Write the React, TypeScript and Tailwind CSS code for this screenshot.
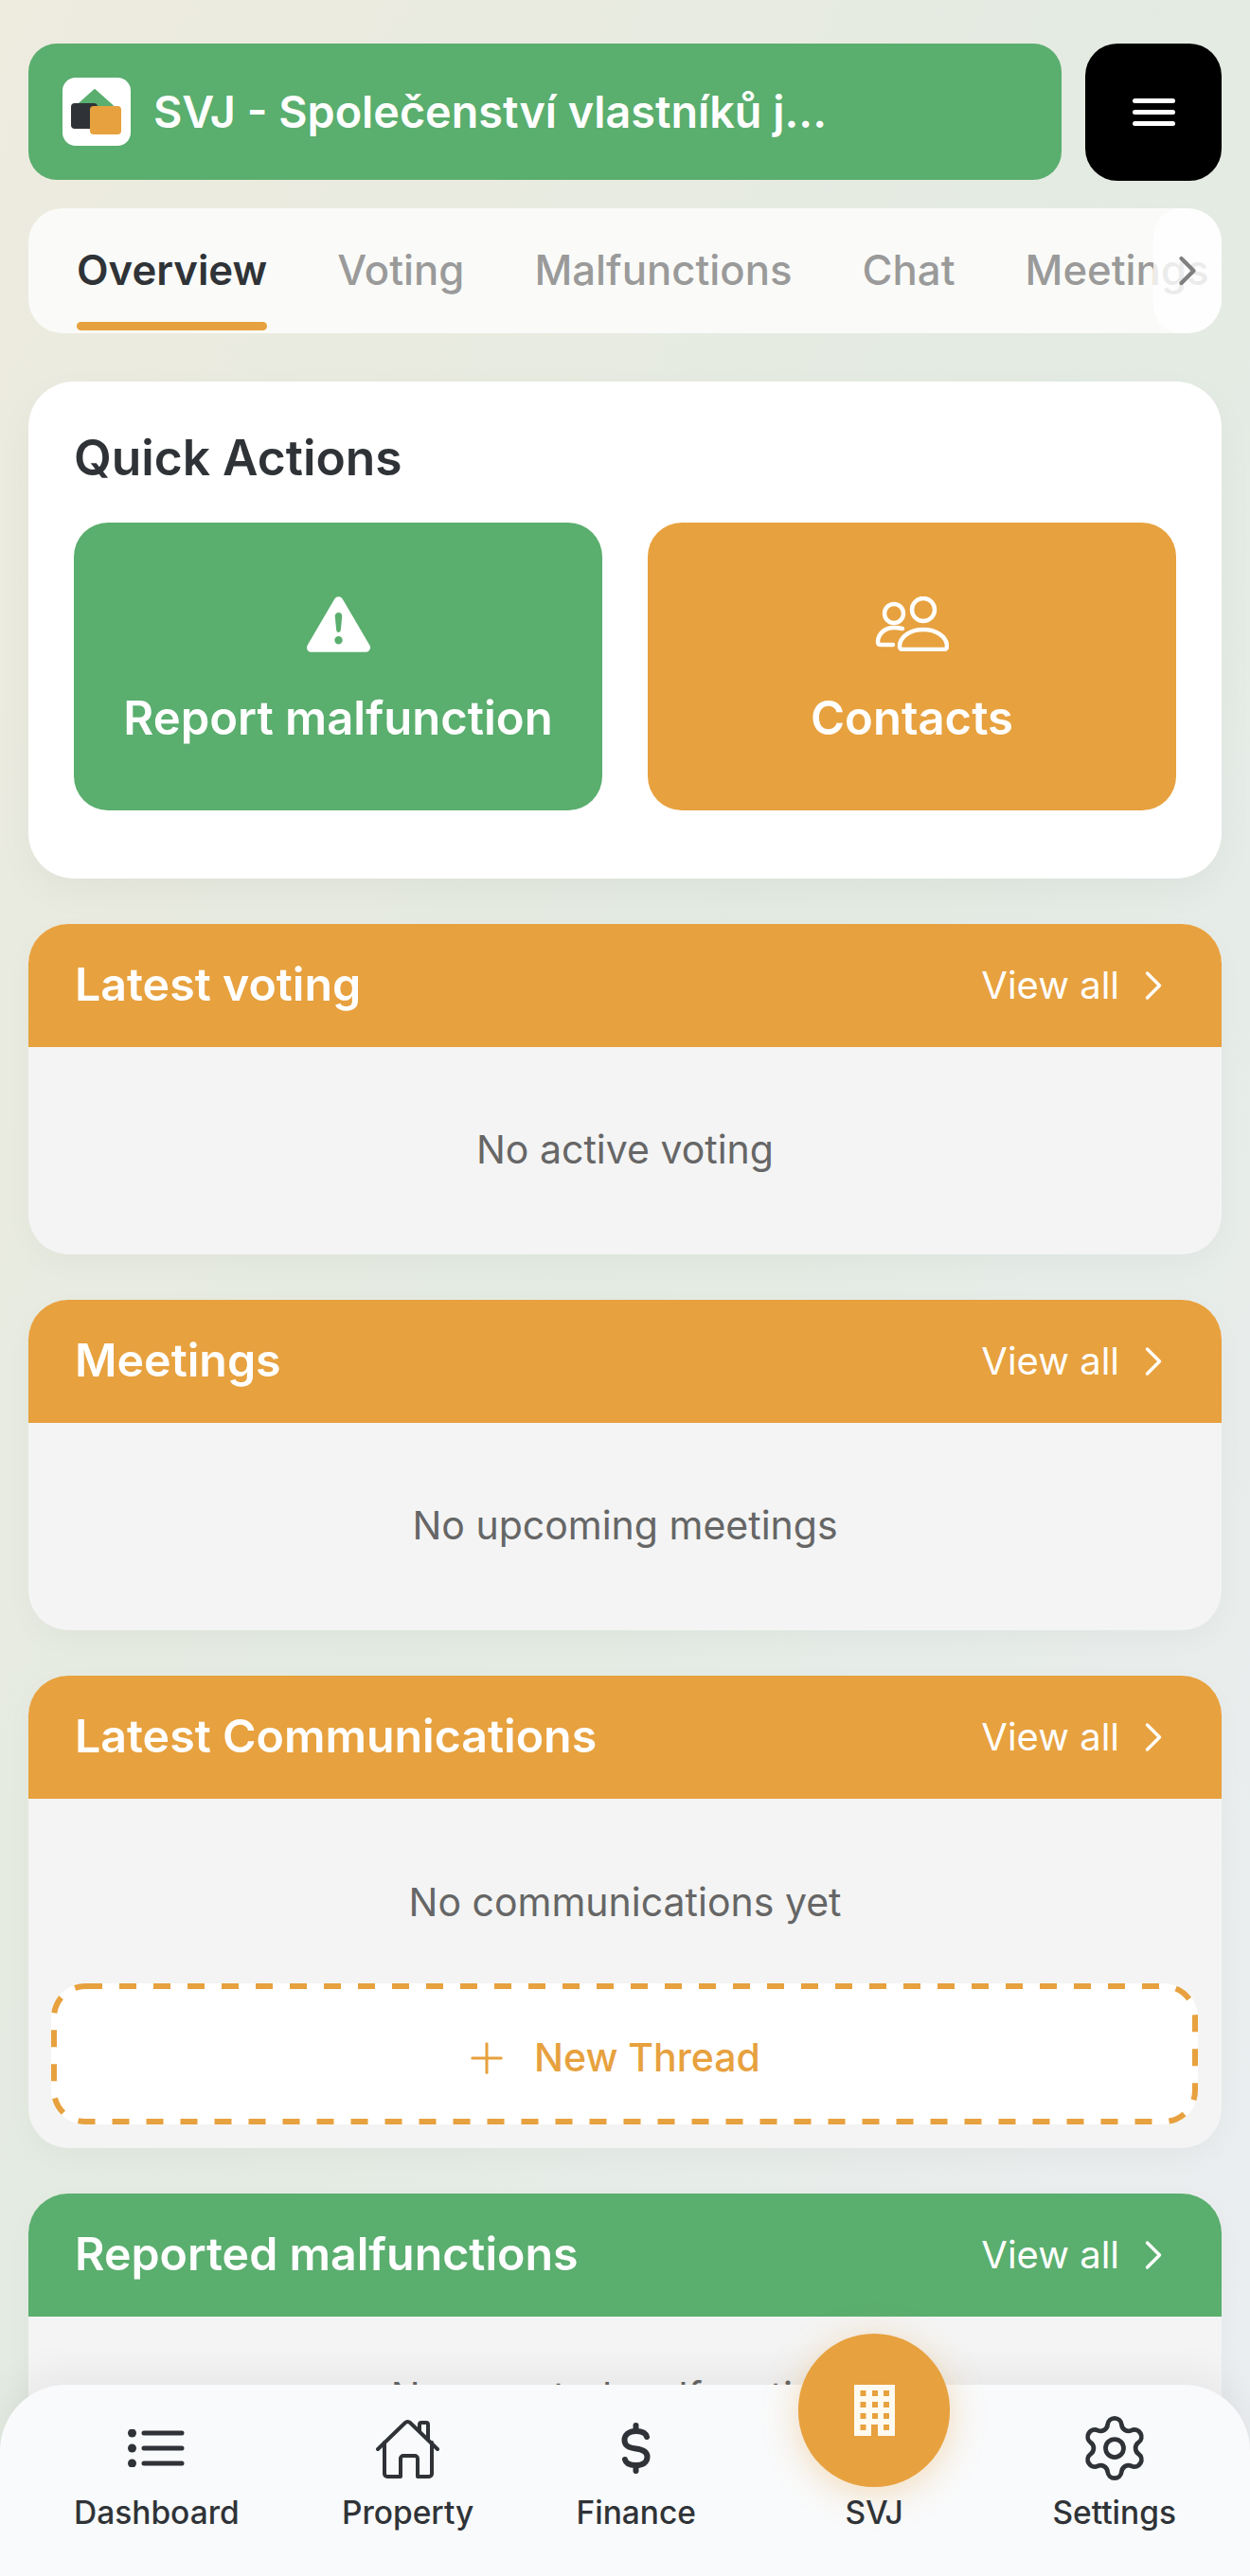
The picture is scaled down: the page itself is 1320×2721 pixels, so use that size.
import { ChevronRight, Plus, Settings } from 'lucide-react'
import { BsExclamationTriangleFill } from 'react-icons/bs'

const tabs = ['Overview', 'Voting', 'Malfunctions', 'Chat', 'Meetings']

function Logo() {
  return (
    <span className="flex h-[72px] w-[72px] shrink-0 rounded-[14px] bg-white">
      <svg width="72" height="72" viewBox="0 0 72 72" aria-hidden="true">
        <path d="M34 13 L53 30 H15 Z" fill="#5aae6e" stroke="#5aae6e" strokeWidth="2" strokeLinejoin="round" />
        <rect x="9" y="27" width="28" height="27" rx="4" fill="#2f3337" />
        <rect x="29" y="30" width="33" height="30" rx="4" fill="#e7a13e" />
      </svg>
    </span>
  )
}

function ContactsIcon() {
  return (
    <svg width="78" height="58" viewBox="0 0 78 58" fill="none" stroke="white" strokeWidth="4.5" strokeLinecap="round" strokeLinejoin="round" aria-hidden="true">
      <ellipse cx="51" cy="14" rx="12" ry="12" />
      <ellipse cx="20" cy="18" rx="10" ry="10" />
      <path d="M29 56 H73 a3 3 0 0 0 3-3 C76 42 64 35 51 35 C38 35 26 42 26 53 a3 3 0 0 0 3 3 Z" />
      <path d="M29 34 C27 33.5 24 33 20 33 C10 33 3 40 3 48 C3 50 4 51 6 51 H19" />
    </svg>
  )
}

function ListIcon() {
  return (
    <svg width="60" height="40" viewBox="0 0 60 40" fill="none" stroke="#2f3337" strokeWidth="5" strokeLinecap="round" aria-hidden="true">
      <path d="M17 4 H57 M17 20 H57 M17 36 H57" />
      <circle cx="4.5" cy="4" r="4.5" fill="#2f3337" stroke="none" />
      <circle cx="4.5" cy="20" r="4.5" fill="#2f3337" stroke="none" />
      <circle cx="4.5" cy="36" r="4.5" fill="#2f3337" stroke="none" />
    </svg>
  )
}

function HomeIcon() {
  return (
    <svg width="67" height="63" viewBox="0 0 67 63" fill="none" stroke="#2f3337" strokeWidth="4" strokeLinecap="round" strokeLinejoin="round" aria-hidden="true">
      <path d="M2 32 L31 4 a3.5 3.5 0 0 1 5 0 L65 32" />
      <path d="M9 25 V58 a3 3 0 0 0 3 3 H26 V42 a3 3 0 0 1 3-3 h12 a3 3 0 0 1 3 3 V61 H56 a3 3 0 0 0 3-3 V25" />
      <path d="M46 12 V6 a2 2 0 0 1 2-2 h5 a2 2 0 0 1 2 2 V21" />
    </svg>
  )
}

function DollarIcon() {
  return (
    <svg width="31" height="54" viewBox="0 0 31 54" fill="none" stroke="#2f3337" strokeWidth="6" strokeLinecap="round" aria-hidden="true">
      <path d="M15.5 3 V9 M15.5 45 V51" />
      <path d="M27 15 C26 11 22 9 15.5 9 C8 9 3.5 13 3.5 18.5 C3.5 24.5 8 26.5 15.5 27.5 C23 28.5 27.5 30.5 27.5 36 C27.5 42 23 45 15.5 45 C9 45 5 43 4 39" />
    </svg>
  )
}

function BuildingIcon() {
  const rows = [6, 18, 30, 42]
  const cols = [6.5, 19, 31]
  return (
    <svg width="43" height="54" viewBox="0 0 43 54" aria-hidden="true">
      <rect width="43" height="54" fill="#fffaf0" />
      {rows.map(y => cols.map(x => <rect key={`${x}-${y}`} x={x} y={y} width="6" height="6" fill="#e7a13e" />))}
      <rect x="18" y="42" width="7" height="12" fill="#e7a13e" />
    </svg>
  )
}

function Section({ title, color, empty, bodyClass, children }: {
  title: string
  color: string
  empty: string
  bodyClass: string
  children?: React.ReactNode
}) {
  return (
    <section className="mt-[48px] overflow-hidden rounded-[42px] bg-[#f4f4f4] shadow-[0_10px_30px_rgba(0,0,0,0.03)]">
      <div className={`flex h-[130px] items-center justify-between pl-[49px] pr-[60px] text-white ${color}`}>
        <h2 className="mb-[2px] text-[48.3px] font-semibold">{title}</h2>
        <a href="#" className="flex items-center gap-[10px] text-[40px]">
          View all
          <ChevronRight size={52} strokeWidth={1.6} className="-mr-[14px]" />
        </a>
      </div>
      <p className={`text-center text-[41px] leading-[60px] text-[#666666] ${bodyClass}`}>{empty}</p>
      {children}
    </section>
  )
}

function NavItem({ label, icon }: { label: string; icon: React.ReactNode }) {
  return (
    <a href="#" className="flex flex-col items-center">
      <span className="flex h-[72px] items-center justify-center">{icon}</span>
      <span className="mt-[12px] text-[33.5px] font-medium leading-[40px] text-[#2f3337]">{label}</span>
    </a>
  )
}

export default function App() {
  return (
    <div className="relative h-[2721px] overflow-hidden bg-linear-to-br from-[#eeebdf] via-[#e3ebe2] to-[#eceef2] px-[30px] pt-[46px] font-['Inter',sans-serif]">
      <header className="flex gap-[25px]">
        <div className="flex h-[144px] flex-1 items-center gap-[24px] rounded-[30px] bg-[#5aae6e] pl-[36px] text-white">
          <Logo />
          <h1 className="text-[46.7px] font-semibold">SVJ - Společenství vlastníků j...</h1>
        </div>
        <button className="flex h-[145px] w-[144px] flex-col items-center justify-center gap-[7px] rounded-[34px] bg-black" aria-label="Menu">
          <span className="h-[5px] w-[45px] rounded-full bg-white" />
          <span className="h-[5px] w-[45px] rounded-full bg-white" />
          <span className="h-[5px] w-[45px] rounded-full bg-white" />
        </button>
      </header>

      <nav className="relative mt-[29px] flex h-[132px] gap-[74px] overflow-hidden rounded-[36px] bg-[#fafbf8] pl-[51px]">
        {tabs.map((tab, i) => (
          <a
            key={tab}
            href="#"
            className={`relative flex shrink-0 items-center text-[43.7px] ${i === 0 ? 'font-semibold text-[#2f3337]' : 'font-medium text-[#9a9a9a]'}`}
          >
            {tab}
            {i === 0 && <span className="absolute inset-x-0 bottom-[3px] h-[9px] rounded-full bg-[#e7a13e]" />}
          </a>
        ))}
        <span className="absolute inset-y-0 right-0 flex w-[72px] items-center justify-center rounded-l-[30px] bg-white/80 text-[#808080]">
          <ChevronRight size={52} strokeWidth={2} />
        </span>
      </nav>

      <section className="mt-[51px] rounded-[48px] bg-white pb-[72px] pl-[48px] pr-[48px] pt-[48px] shadow-[0_14px_40px_rgba(0,0,0,0.04)]">
        <h2 className="text-[51.5px] font-semibold leading-[64px] text-[#2f3337]">Quick Actions</h2>
        <div className="mt-[37px] grid grid-cols-2 gap-[48px]">
          <a href="#" className="flex h-[304px] flex-col items-center justify-center rounded-[36px] bg-[#5aae6e] pt-[10px] text-white">
            <span className="flex h-[64px] items-center">
              <BsExclamationTriangleFill size={67} />
            </span>
            <span className="mt-[36px] text-[49px] font-semibold leading-[64px]">Report malfunction</span>
          </a>
          <a href="#" className="flex h-[304px] flex-col items-center justify-center rounded-[36px] bg-[#e7a13e] pt-[10px] text-white">
            <span className="flex h-[64px] items-center">
              <ContactsIcon />
            </span>
            <span className="mt-[36px] text-[49px] font-semibold leading-[64px]">Contacts</span>
          </a>
        </div>
      </section>

      <Section title="Latest voting" color="bg-[#e7a13e]" empty="No active voting" bodyClass="pb-[81px] pt-[78px]" />
      <Section title="Meetings" color="bg-[#e7a13e]" empty="No upcoming meetings" bodyClass="pb-[81px] pt-[78px]" />
      <Section title="Latest Communications" color="bg-[#e7a13e]" empty="No communications yet" bodyClass="pb-[56px] pt-[79px]">
        <a
          href="#"
          className="relative mb-[25px] ml-[24px] mr-[25px] flex h-[149px] items-center justify-center gap-[24px] rounded-[36px] bg-white pr-[28px] pt-[8px] text-[41px] font-medium text-[#e7a13e]"
        >
          <svg className="absolute inset-0 h-full w-full" fill="none" aria-hidden="true">
            <rect x="3" y="3" width="1205" height="143" rx="33" stroke="#e7a13e" strokeWidth="6" strokeDasharray="18 18" />
          </svg>
          <Plus size={52} strokeWidth={1.4} />
          New Thread
        </a>
      </Section>
      <Section title="Reported malfunctions" color="bg-[#5aae6e]" empty="No reported malfunctions" bodyClass="pb-[80px] pt-[54px]" />

      <footer className="absolute inset-x-0 bottom-0 flex h-[202px] justify-between rounded-t-[70px] bg-[#f9fafb] px-[78px] pt-[31px] shadow-[0_-14px_40px_rgba(0,0,0,0.05)]">
        <NavItem label="Dashboard" icon={<ListIcon />} />
        <NavItem label="Property" icon={<HomeIcon />} />
        <NavItem label="Finance" icon={<DollarIcon />} />
        <a href="#" className="flex w-[160px] flex-col items-center">
          <span className="-mt-[85px] flex h-[162px] w-[160px] items-center justify-center rounded-full bg-[#e7a13e] shadow-[0_6px_36px_rgba(229,160,62,0.35)]">
            <BuildingIcon />
          </span>
          <span className="mt-[7px] text-[33.5px] font-medium leading-[40px] text-[#2f3337]">SVJ</span>
        </a>
        <NavItem label="Settings" icon={<Settings size={76} strokeWidth={1.5} color="#2f3337" />} />
      </footer>
    </div>
  )
}
